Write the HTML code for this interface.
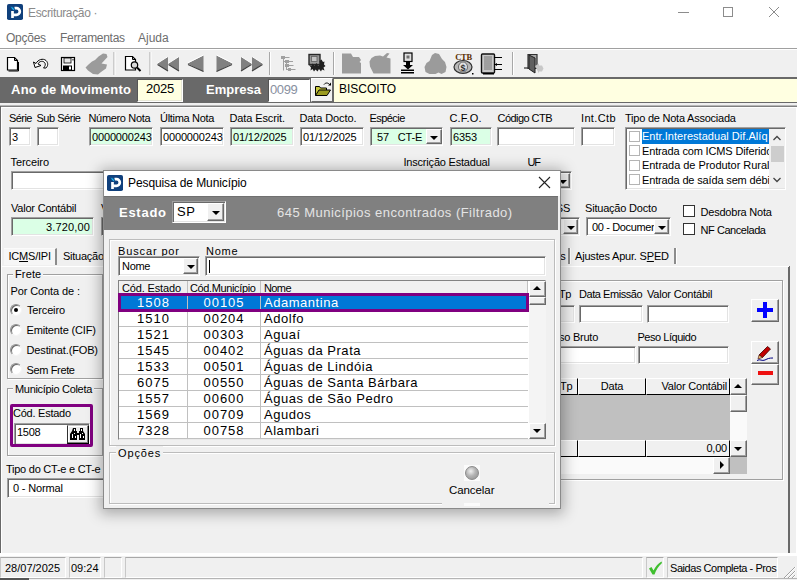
<!DOCTYPE html>
<html><head><meta charset="utf-8">
<style>
*{box-sizing:border-box;margin:0;padding:0}
html,body{width:797px;height:580px;overflow:hidden;background:#f0f0f0;font-family:"Liberation Sans",sans-serif;font-size:11px;color:#000}
.a{position:absolute;white-space:nowrap}
.l{position:absolute;white-space:nowrap;font-size:11px;line-height:14px;letter-spacing:-0.25px;color:#000}
.i{position:absolute;background:#fff;border:1px solid;border-color:#a0a0a0 #fff #fff #a0a0a0;box-shadow:inset 1px 1px 0 #696969,inset -1px -1px 0 #e3e3e3;font-size:11px;line-height:18px;padding-left:2px;white-space:nowrap;overflow:hidden;letter-spacing:-0.15px}
.g{background:#dbffe6}
.y{background:#ffffe1}
.db{position:absolute;background:#f0f0f0;border:1px solid;border-color:#fff #696969 #696969 #fff;box-shadow:inset -1px -1px 0 #a0a0a0}
.db:after{content:"";position:absolute;left:50%;top:50%;margin:-1px 0 0 -4px;border:4px solid transparent;border-top-color:#000;border-bottom-width:0}
.bt{position:absolute;background:#f0f0f0;border:1px solid;border-color:#fff #696969 #696969 #fff;box-shadow:inset -1px -1px 0 #a0a0a0}
.cb{position:absolute;width:12px;height:12px;background:#fff;border:1px solid #333}
.gb{position:absolute;border:1px solid #a0a0a0;box-shadow:inset 1px 1px 0 #fff,1px 1px 0 #fff}
.gt{position:absolute;background:#f0f0f0;padding:0 2px;font-size:11px;line-height:14px;white-space:nowrap;letter-spacing:-0.15px}
.rd{position:absolute;width:12px;height:12px;border-radius:50%;background:#fff;border:1px solid;border-color:#909090 #f4f4f4 #f4f4f4 #909090;box-shadow:inset 1px 1px 0 #686868}
.vs{position:absolute;width:3px;border-left:2px solid #8c8c8c;border-right:1px solid #fff}
.tl{font-size:11px;line-height:15px;letter-spacing:-0.15px;width:127px;overflow:hidden}
.tc{width:11px;height:11px;background:#fff;border:1px solid #b4b4b4}
.hc{position:absolute;background:#f0f0f0;border:1px solid;border-color:#fff #000 #000 #fff;font-size:11px;line-height:15px;white-space:nowrap;overflow:hidden;letter-spacing:-0.20px}
.sb{position:absolute;background:#f0f0f0;border:1px solid;border-color:#fff #696969 #696969 #fff;box-shadow:inset -1px -1px 0 #a0a0a0}
.sb i{position:absolute;left:50%;top:50%;border:4px solid transparent}
.sb .up{margin:-3px 0 0 -5px;border-bottom-color:#000;border-top-width:0}
.sb .dn{margin:-2px 0 0 -5px;border-top-color:#000;border-bottom-width:0}
.sb .rt{margin:-5px 0 0 -2px;border-left-color:#000;border-right-width:0}
.sbt{background:#fafafa}
.sp{position:absolute;height:21px;border:1px solid;border-color:#a8a8a8 #fff #fff #c8c8c8;font-size:11px;line-height:20px;padding-left:5px;white-space:nowrap;overflow:hidden;letter-spacing:-0.15px}
.gh{height:14px;background:#f0f0f0;border-right:1px solid #c0c0c0;border-bottom:1px solid #c0c0c0;font-size:11px;line-height:14px;padding-left:3px;letter-spacing:-0.15px;overflow:hidden}
.gr{left:15px;width:409px;height:16px;border-bottom:1px solid #c0c0c0;font-size:13px;line-height:15px;letter-spacing:1px;background:#fff}
.gr span{position:absolute;top:0;height:15px;overflow:hidden}
.gr .c1{left:0;width:69px;text-align:center;padding-left:1px;border-right:1px solid #c0c0c0}
.gr .c2{left:69px;width:73px;text-align:center;padding-left:0;border-right:1px solid #c0c0c0}
.gr .c3{left:142px;width:267px;padding-left:3px;letter-spacing:0.53px}
.sel{background:#0078d7;color:#fff}
</style></head><body>
<!-- title bar -->
<div class="a" style="left:0;top:0;width:797px;height:30px;background:#fff"></div>
<svg class="a" style="left:7px;top:4px" width="16" height="16" viewBox="0 0 16 16"><rect width="16" height="16" rx="1.800" fill="#10407c"/><path d="M5.500 14V7M7.500 4.200h2a3.300 3.300 0 0 1 0 6.600H5.500" fill="none" stroke="#fff" stroke-width="2.700"/><path d="M3.600 2.300c2.500 0.500 4.200 2 4 4.500C5.300 6.400 3.900 4.800 3.600 2.300z" fill="#19b5f0" stroke="#10407c" stroke-width="0.800"/></svg>
<div class="a" style="left:28px;top:5px;font-size:12px;line-height:16px;color:#8a8a8a;letter-spacing:-0.35px">Escrituração ·</div>
<svg class="a" style="left:674px;top:0" width="122" height="26" viewBox="0 0 122 26"><g stroke="#8c8c8c" stroke-width="1" fill="none"><path d="M4 12.5h11"/><rect x="49.500" y="7.500" width="9" height="9"/><path d="M95 7l10 10M105 7l-10 10"/></g></svg>
<!-- menu -->
<div class="a" style="left:0;top:30px;width:797px;height:18px;background:#fff"></div>
<div class="a" style="left:6px;top:30px;font-size:12px;line-height:16px;color:#6d6d6d;letter-spacing:-0.25px">Opções</div>
<div class="a" style="left:60px;top:30px;font-size:12px;line-height:16px;color:#6d6d6d;letter-spacing:-0.3px">Ferramentas</div>
<div class="a" style="left:138px;top:30px;font-size:12px;line-height:16px;color:#6d6d6d">Ajuda</div>
<div class="a" style="left:0;top:48px;width:797px;height:1px;background:#a0a0a0"></div>
<!-- toolbar -->
<div class="a" id="tb" style="left:0;top:49px;width:797px;height:28px;background:#f0f0f0"></div>
<svg class="a" style="left:0;top:49px" width="797" height="28" viewBox="0 49 797 28" shape-rendering="auto">
<rect x="0" y="49" width="797" height="1" fill="#fff"/>
<!-- new -->
<path d="M7.500 57.500h7l3 3v9.500h-10z" fill="#fff" stroke="#000" stroke-width="1.200"/><path d="M14.500 57.500v3h3" fill="none" stroke="#000" stroke-width="1"/><path d="M8.500 71h10v-9" fill="none" stroke="#000" stroke-width="1"/>
<!-- undo -->
<path d="M35 67.500l-1.500-5.500 2.500 1.500c2-4 7-5.500 10-3 2.500 2.500 2 5.500 0 7.500h-2.500c2-2 2.500-4.500 0.500-6-2-1.500-5-0.500-6 2l3 1.500z" fill="#fff" stroke="#000" stroke-width="1" stroke-linejoin="round"/>
<!-- save -->
<rect x="61.500" y="57.500" width="13" height="13" fill="#fff" stroke="#000" stroke-width="1.200"/><rect x="64" y="58" width="7" height="5" fill="#e8e8e8" stroke="#000" stroke-width="0.800"/><rect x="63" y="65.500" width="9" height="5" fill="#000"/><rect x="69" y="66.500" width="2" height="3" fill="#fff"/><rect x="72.500" y="59" width="1" height="1.500" fill="#000"/>
<!-- brush gray -->
<path d="M103 53.500l3.500 0.500 1 3-6 6.500 5.500 1-1 4-5 3.500-3 2.500-5-0.500-5-3.500-2.500-3 3-3 3.500-3 3-1.500 3.500-3.500z" fill="#9b9b9b"/>
<!-- sep -->
<g id="sp"><rect x="113.500" y="52" width="1" height="23" fill="#a8a8a8"/><rect x="114.500" y="52" width="1" height="23" fill="#fff"/></g>
<!-- preview -->
<path d="M125.500 56.500h7l3 3v10.500h-10z" fill="#fff" stroke="#000" stroke-width="1.200"/><path d="M132.500 56.500v3h3" fill="none" stroke="#000"/><circle cx="134.500" cy="65" r="3.200" fill="#d8d8d8" stroke="#000" stroke-width="1.200"/><path d="M137 67.500l3.500 3.500" stroke="#000" stroke-width="2"/>
<use href="#sp" x="36"/>
<!-- dbl left -->
<g id="tl"><path d="M157 63.500l11-7v14.500z" fill="#808080"/><path d="M157 63.500l11-7" stroke="#fff" stroke-width="1"/><path d="M157.500 64.500l10.500 6.500" stroke="#404040" stroke-width="1.200"/></g>
<use href="#tl" x="11"/>
<path d="M187.500 63.500l16-8v16z" fill="#808080"/><path d="M187.500 63l16-8" stroke="#fff"/><path d="M188 64.500l15.500 7" stroke="#404040" stroke-width="1.200"/>
<path d="M232.500 63.500l-16-8v16z" fill="#808080"/><path d="M232.500 63l-16-8" stroke="#fff"/><path d="M232 64.500l-15.500 7" stroke="#404040" stroke-width="1.200"/>
<g id="tr"><path d="M252 63.500l-11-7v14.500z" fill="#808080"/><path d="M252 63.500l-11-7" stroke="#fff" stroke-width="1"/><path d="M251.500 64.500l-10.500 6.500" stroke="#404040" stroke-width="1.200"/></g>
<use href="#tr" x="11"/>
<use href="#sp" x="155.500"/>
<!-- tree gray -->
<g stroke="#a0a0a0" fill="none"><path d="M283.500 57v13.500M283.500 57.500h6M283.500 61.500h3M286.500 61.500v8.500M288 61.500h5M286.500 65.500h7M286.500 69.500h9"/></g><g fill="#a0a0a0"><rect x="281" y="56" width="4" height="3"/><rect x="285" y="60" width="4" height="3"/><rect x="285" y="64" width="4" height="3"/><rect x="288" y="68" width="3" height="3"/></g>
<!-- puzzle/monitor dark -->
<rect x="309" y="54.500" width="11" height="10" fill="#989898" stroke="#282828" stroke-width="1.400"/><rect x="311.500" y="56.500" width="5.500" height="5" fill="#c4c4c4" stroke="#606060" stroke-width="0.800"/><path d="M309 65l2.500 0.500 1-2 2 2 2-2.500 1.500 2.500 2-1-0.500-3.500 2-1.500 1.500 2.500 1.500-0.500-0.500 3 1.500 1.500-2 1.500 1 3-2.500-1-1 2-2-2.500-1.500 2.500-2-2-1.500 2-1.500-2.500-2 1.500 0.500-3z" fill="#202020"/>
<use href="#sp" x="219.500"/>
<!-- gray folder -->
<path d="M342 53.500h9l2 3.500h6l2 3-1.500 2 1.500 1v10.500h-19z" fill="#9b9b9b"/>
<!-- gray apple-like -->
<path d="M375 56l5-0.500 3 1 4-3.500 2.500 0.500-3 4 4 1v15h-17l-3.500-7-0.500-5 2-3.500z" fill="#9b9b9b"/>
<!-- download -->
<rect x="404" y="53" width="8" height="8.500" fill="#e0e0e0" stroke="#000" stroke-width="1.200"/><rect x="406.500" y="55.500" width="3" height="3" fill="#707070"/><path d="M406 62h4v3h3l-5 4.500-5-4.500h3z" fill="#000"/><rect x="401" y="69.500" width="13" height="1.500" fill="#000"/><rect x="401" y="72" width="13" height="1.500" fill="#000"/>
<!-- gray heap -->
<path d="M432 55l3-2 4 1 3 5 3 3 1.500 5-1 5-4 2-3-1.500-3 1.500h-6l-4-2-1-5 2-4 3-2z" fill="#9b9b9b"/>
<!-- CTB bag -->
<text x="463.500" y="60" font-family="Liberation Serif" font-weight="bold" font-size="8.500" fill="#5a2d00" text-anchor="middle" letter-spacing="-0.300">CTB</text>
<ellipse cx="463" cy="67" rx="9" ry="6.500" fill="#b8b8b8" stroke="#303030" stroke-width="1.200"/><ellipse cx="463" cy="67" rx="4.500" ry="5" fill="#e0e0e0" stroke="#505050" stroke-width="0.800"/><text x="463" y="70.500" font-family="Liberation Sans" font-weight="bold" font-size="9" fill="#303030" text-anchor="middle">$</text><rect x="472" y="73" width="1.500" height="1.500" fill="#000"/>
<!-- notebook -->
<rect x="481.500" y="54" width="13" height="19" rx="1" fill="#c8c8c8" stroke="#101010" stroke-width="1.400"/><g stroke="#606060" stroke-width="0.800"><path d="M484 57h8M484 59h8M484 61h8M484 63h8M484 65h8M484 67h8M484 69h8"/></g><g stroke="#000" stroke-width="1.200"><path d="M494 57.500h8M494 64.500h8M494 69.500h8"/></g><path d="M497 63l-2.500 1.500 2.500 1.500z" fill="#000"/><rect x="483" y="73" width="11" height="1.500" fill="#000"/>
<use href="#sp" x="398.500"/>
<!-- exit door -->
<path d="M528 54.500h9v14h-9z" fill="#a8a8a8" stroke="#303030" stroke-width="1.200"/><path d="M529 55l6 3v15l-6-4z" fill="#606060" stroke="#202020" stroke-width="1"/><path d="M524 68h5" stroke="#303030" stroke-width="1.200"/><path d="M535 66l4-2.500v2h3l1.500 3-1.500 3h-3v2z" fill="#c8c8c8"/>
</svg>
<!-- ano bar -->
<div class="a" style="left:0;top:77px;width:797px;height:26px;background:#696969"></div>
<div class="a" style="left:11px;top:82px;font-size:13px;font-weight:bold;color:#fff;line-height:16px;letter-spacing:0.25px">Ano de Movimento</div>
<div class="a y" style="left:137px;top:79px;width:46px;height:23px;font-size:13px;line-height:18px;padding-left:8px;border:1px solid;border-color:#555 #fff #fff #555;box-shadow:inset -1px -1px 0 #e8e8d8;letter-spacing:-0.2px">2025</div>
<div class="a" style="left:206px;top:82px;font-size:13px;font-weight:bold;color:#fff;line-height:16px">Empresa</div>
<div class="a" style="left:268px;top:79px;width:42px;height:23px;background:#fff;font-size:13px;line-height:20px;padding-left:1px;color:#8890a0;letter-spacing:-0.4px;border:1px solid;border-color:#555 #fff #fff #555">0099</div>
<div class="a" style="left:311px;top:78px;width:22px;height:24px;background:#f0f0f0;border:1px solid;border-color:#fff #696969 #696969 #fff"></div>
<svg class="a" style="left:314px;top:81px" width="18" height="16" viewBox="0 0 18 16"><path d="M1.500 14.500v-9h4l1 1.500h6v2.500" fill="#c8c83c" stroke="#000" stroke-width="1"/><path d="M1.500 14.500l3.500-5.500h11.500l-3.500 5.500z" fill="#9a9a20" stroke="#000" stroke-width="1"/><path d="M10 3.500c1.500-2 4-2 5.500 0" fill="none" stroke="#000" stroke-width="1"/><path d="M14 4.500h3v-3z" fill="#000"/></svg>
<div class="a y" style="left:334px;top:79px;width:463px;height:23px;font-size:12px;line-height:21px;padding-left:5px">BISCOITO</div>
<div class="a" style="left:0;top:103px;width:797px;height:2px;background:#f0f0f0"></div>
<div class="a" style="left:0;top:105px;width:797px;height:1px;background:#b8b8b8"></div><div class="a" style="left:0;top:106px;width:797px;height:1px;background:#808080"></div>


<!-- main form frame -->
<div class="a" style="left:0;top:106px;width:1px;height:447px;background:#686868"></div>
<div class="a" style="left:1px;top:107px;width:1px;height:446px;background:#fff"></div>
<div class="a" style="left:1px;top:107px;width:796px;height:1px;background:#fff"></div>
<div class="a" style="left:796px;top:107px;width:1px;height:447px;background:#fff"></div>
<!-- row 1 labels -->
<div class="l" style="left:9.0px;top:111px;letter-spacing:-0.55px">Série</div>
<div class="l" style="left:36.5px;top:111px;letter-spacing:-0.48px">Sub Série</div>
<div class="l" style="left:88.5px;top:111px;letter-spacing:-0.34px">Número Nota</div>
<div class="l" style="left:160.0px;top:111px;letter-spacing:-0.30px">Última Nota</div>
<div class="l" style="left:229.5px;top:111px;letter-spacing:-0.12px">Data Escrit.</div>
<div class="l" style="left:299.5px;top:111px;letter-spacing:-0.11px">Data Docto.</div>
<div class="l" style="left:369.5px;top:111px;letter-spacing:-0.55px">Espécie</div>
<div class="l" style="left:449.5px;top:111px;letter-spacing:0.17px">C.F.O.</div>
<div class="l" style="left:497.5px;top:111px;letter-spacing:-0.55px">Código CTB</div>
<div class="l" style="left:581.0px;top:111px;letter-spacing:0.35px">Int.Ctb</div>
<div class="l" style="left:625.0px;top:111px;letter-spacing:-0.23px">Tipo de Nota Associada</div>
<!-- row 1 inputs -->
<div class="i" style="left:9px;top:127px;width:22px;height:19px">3</div>
<div class="i" style="left:37px;top:127px;width:22px;height:19px"></div>
<div class="i g" style="left:89px;top:127px;width:64px;height:19px">0000000243</div>
<div class="i" style="left:160px;top:127px;width:64px;height:19px">0000000243</div>
<div class="i g" style="left:230px;top:127px;width:64px;height:19px">01/12/2025</div>
<div class="i" style="left:300px;top:127px;width:64px;height:19px">01/12/2025</div>
<div class="i g" style="left:370px;top:127px;width:73px;height:19px;padding-left:6px">57 &nbsp; CT-E</div>
<div class="db" style="left:426px;top:129px;width:16px;height:15px"></div>
<div class="i g" style="left:450px;top:127px;width:42px;height:19px">6353</div>
<div class="i" style="left:497px;top:127px;width:78px;height:19px"></div>
<div class="i" style="left:581px;top:127px;width:34px;height:19px"></div>
<!-- tipo list -->
<div class="i" style="left:625px;top:127px;width:161px;height:63px;padding:0"></div>
<div class="a" style="left:769px;top:129px;width:16px;height:59px;background:#f0f0f0"></div>
<div class="a" style="left:771px;top:146px;width:13px;height:16px;background:#cdcdcd"></div>
<svg class="a" style="left:769px;top:129px" width="16" height="59" viewBox="0 0 16 59"><path d="M4.500 11 8 7.500 11.500 11M4.500 49 8 52.500 11.500 49" fill="none" stroke="#444" stroke-width="1.300"/></svg>
<div class="a" style="left:642px;top:129px;width:127px;height:15px;background:#0078d7"></div>
<div class="a tl" style="left:642px;top:129px;color:#fff;letter-spacing:0.03px">Entr.Interestadual Dif.Alíq</div>
<div class="a tl" style="left:642px;top:144px">Entrada com ICMS Diferido</div>
<div class="a tl" style="left:642px;top:158px;letter-spacing:-0.04px">Entrada de Produtor Rural</div>
<div class="a tl" style="left:642px;top:173px">Entrada de saída sem débi</div>
<div class="a tc" style="left:629px;top:131px"></div>
<div class="a tc" style="left:629px;top:145px"></div>
<div class="a tc" style="left:629px;top:160px"></div>
<div class="a tc" style="left:629px;top:174px"></div>
<!-- row 2 -->
<div class="l" style="left:10.5px;top:155px;letter-spacing:-0.09px">Terceiro</div>
<div class="l" style="left:403.5px;top:155px;letter-spacing:-0.20px">Inscrição Estadual</div>
<div class="l" style="left:527.5px;top:155px;letter-spacing:-1.2px">UF</div>
<div class="i" style="left:11px;top:171px;width:300px;height:19px"></div>
<div class="i" style="left:520px;top:171px;width:52px;height:19px"></div>
<div class="db" style="left:555px;top:173px;width:15px;height:15px"></div>
<!-- row 3 -->
<div class="l" style="left:11.0px;top:201px;letter-spacing:-0.21px">Valor Contábil</div>
<div class="i g" style="left:11px;top:217px;width:83px;height:19px;text-align:right;padding-right:3px;letter-spacing:0.15px">3.720,00</div>
<div class="l" style="left:101px;top:201px">V</div>
<div class="i" style="left:101px;top:217px;width:60px;height:19px"></div>
<div class="l" style="left:553px;top:201px">ISS</div>
<div class="i" style="left:540px;top:217px;width:40px;height:19px"></div>
<div class="db" style="left:563px;top:219px;width:15px;height:15px"></div>
<div class="l" style="left:585.0px;top:201px;letter-spacing:-0.20px">Situação Docto</div>
<div class="i" style="left:586px;top:217px;width:85px;height:19px;padding-left:5px;letter-spacing:-0.35px">00 - Documento</div>
<div class="db" style="left:654px;top:219px;width:15px;height:15px"></div>
<div class="cb" style="left:683px;top:205px"></div>
<div class="l" style="left:700.5px;top:205px;letter-spacing:-0.21px">Desdobra Nota</div>
<div class="cb" style="left:683px;top:223px"></div>
<div class="l" style="left:700.5px;top:223px;letter-spacing:-0.44px">NF Cancelada</div>

<!-- tabs -->
<div class="a" style="left:4px;top:248px;width:53px;height:17px;background:#f6f6f6;border-right:2px solid #8c8c8c;border-top:1px solid #fbfbfb"></div>
<div class="l" style="left:8.5px;top:249px;letter-spacing:-0.22px">IC<u>M</u>S/IPI</div>

<div class="l" style="left:63px;top:249px">Situação</div>
<div class="l" style="left:534px;top:249px">Outros</div>
<div class="vs" style="left:568px;top:248px;height:16px"></div>
<div class="l" style="left:575.0px;top:249px;letter-spacing:-0.19px">Ajustes Apur. S<u>P</u>ED</div>
<div class="vs" style="left:674px;top:248px;height:16px"></div>
<!-- tab page borders -->
<div class="a" style="left:788px;top:266px;width:2px;height:287px;background:#696969"></div>
<div class="a" style="left:2px;top:266px;width:787px;height:1px;background:#fff"></div>
<!-- left: Frete -->
<div class="gb" style="left:7px;top:274px;width:96px;height:105px"></div>
<div class="gt" style="left:13px;top:267px;letter-spacing:0.13px">Frete</div>
<div class="l" style="left:10.5px;top:284px;letter-spacing:-0.11px">Por Conta de :</div>
<div class="rd" style="left:10px;top:304px"></div><div class="a" style="left:14px;top:308px;width:4px;height:4px;border-radius:50%;background:#000"></div>
<div class="l" style="left:27.0px;top:303px;letter-spacing:-0.16px">Terceiro</div>
<div class="rd" style="left:10px;top:324px"></div>
<div class="l" style="left:26.5px;top:323px;letter-spacing:-0.16px">Emitente (CIF)</div>
<div class="rd" style="left:10px;top:344px"></div>
<div class="l" style="left:26.5px;top:343px;letter-spacing:-0.14px">Destinat.(FOB)</div>
<div class="rd" style="left:10px;top:363px"></div>
<div class="l" style="left:26.5px;top:363px;letter-spacing:-0.36px">Sem Frete</div>
<!-- Municipio Coleta -->
<div class="gb" style="left:7px;top:388px;width:96px;height:68px"></div>
<div class="gt" style="left:13px;top:382px;letter-spacing:-0.31px">Município Coleta</div>

<div class="l" style="left:13.0px;top:406px;letter-spacing:-0.25px">Cód. Estado</div>
<div class="i" style="left:14px;top:423px;width:76px;height:22px;line-height:16px;padding-left:2px;letter-spacing:-0.3px">1508</div>
<div class="bt" style="left:67px;top:425px;width:22px;height:19px;background:#ececec;border-color:#c8c8c8 #000 #000 #303030;box-shadow:inset -1px -1px 0 #808080,inset 1px 1px 0 #fff"></div>
<svg class="a" style="left:70px;top:428px" width="16" height="12" viewBox="0 0 16 12"><g fill="#000"><path d="M3 0h3v3h1v2h2V3h1V0h3v3l2 3v6h-6V7H7v5H0V6l2-3z"/></g><g fill="#fff"><rect x="2" y="6" width="1" height="4"/><rect x="4" y="5" width="1" height="1"/><rect x="10" y="6" width="1" height="4"/><rect x="12" y="5" width="1" height="1"/><rect x="4" y="1" width="1" height="2"/><rect x="11" y="1" width="1" height="2"/><rect x="5" y="8" width="1" height="2"/><rect x="13" y="8" width="1" height="2"/></g></svg>
<div class="a" style="left:10px;top:404px;width:83px;height:43px;border:3px solid #800080;border-radius:2px"></div>
<div class="l" style="left:6px;top:462px">Tipo do CT-e e CT-e</div>
<div class="i" style="left:7px;top:478px;width:300px;height:20px;padding-left:5px">0 - Normal</div>
<!-- right inner panel -->
<div class="gb" style="left:480px;top:280px;width:303px;height:200px"></div>
<div class="l" style="left:559.0px;top:287px;letter-spacing:-0.55px">Tp</div>
<div class="i" style="left:550px;top:305px;width:25px;height:18px;background:#f0f0f0"></div>
<div class="l" style="left:579.0px;top:287px;letter-spacing:-0.45px">Data Emissão</div>
<div class="i" style="left:579px;top:305px;width:64px;height:18px"></div>
<div class="l" style="left:647.0px;top:287px;letter-spacing:-0.21px">Valor Contábil</div>
<div class="i" style="left:647px;top:305px;width:82px;height:18px"></div>
<div class="l" style="left:546.1px;top:330px;letter-spacing:-0.25px">Peso Bruto</div>
<div class="i" style="left:540px;top:346px;width:96px;height:18px"></div>
<div class="l" style="left:637.5px;top:330px;letter-spacing:-0.47px">Peso Líquido</div>
<div class="i" style="left:638px;top:346px;width:91px;height:18px"></div>
<div class="bt" style="left:751px;top:299px;width:28px;height:23px"></div>
<div class="a" style="left:757px;top:308px;width:16px;height:4px;background:#0000ff"></div>
<div class="a" style="left:763px;top:302px;width:4px;height:16px;background:#0000ff"></div>
<div class="bt" style="left:751px;top:341px;width:28px;height:23px"></div>
<svg class="a" style="left:755px;top:344px" width="20" height="18" viewBox="0 0 20 18"><path d="M4 11 12.500 2.500l3 2.500L7.500 13.500z" fill="#c00000" stroke="#400000" stroke-width="0.800"/><path d="M4 11 7.500 13.500 3 15z" fill="#e8c070" stroke="#400000" stroke-width="0.600"/><path d="M2 16.500c3-2 5 1 8-0.500s4-2 8-2" fill="none" stroke="#000080" stroke-width="1"/></svg>
<div class="bt" style="left:751px;top:364px;width:28px;height:21px"></div>
<div class="a" style="left:758px;top:371px;width:15px;height:4px;background:#ee1111"></div>
<!-- right grid -->
<div class="a" style="left:540px;top:378px;width:207px;height:96px;background:#c0c0c0"></div>
<div class="hc" style="left:540px;top:378px;width:38px;height:17px;padding-left:19px">Tp</div>
<div class="hc" style="left:578px;top:378px;width:68px;height:17px;text-align:center">Data</div>
<div class="hc" style="left:646px;top:378px;width:84px;height:17px;text-align:right;padding-right:2px">Valor Contábil</div>
<div class="hc" style="left:540px;top:440px;width:38px;height:17px"></div>
<div class="hc" style="left:578px;top:440px;width:68px;height:17px"></div>
<div class="hc" style="left:646px;top:440px;width:84px;height:17px;text-align:right;padding-right:2px">0,00</div>
<div class="a sbt" style="left:730px;top:378px;width:17px;height:79px"></div>
<div class="sb" style="left:730px;top:378px;width:17px;height:17px"><i class="up"></i></div>
<div class="sb" style="left:730px;top:395px;width:17px;height:17px"></div>
<div class="sb" style="left:730px;top:440px;width:17px;height:17px"><i class="dn"></i></div>
<div class="a sbt" style="left:540px;top:457px;width:190px;height:17px"></div>
<div class="sb" style="left:713px;top:457px;width:17px;height:17px"><i class="rt"></i></div>
<!-- status bar -->
<div class="a" style="left:0;top:553px;width:797px;height:3px;background:#fff"></div><div class="a" style="left:0;top:556px;width:797px;height:24px;background:#f0f0f0"></div>
<div class="sp" style="left:0;top:557px;width:66px;padding-left:4px;letter-spacing:0">28/07/2025</div>
<div class="sp" style="left:69px;top:557px;width:32px;padding-left:1px;letter-spacing:0">09:24</div>
<div class="sp" style="left:104px;top:557px;width:18px"></div>
<div class="sp" style="left:125px;top:557px;width:518px"></div>
<div class="sp" style="left:646px;top:557px;width:18px"></div>
<div class="sp" style="left:667px;top:557px;width:111px;padding-left:2px;letter-spacing:-0.45px">Saidas Completa - Pros</div>
<svg class="a" style="left:648px;top:561px" width="15" height="14" viewBox="0 0 15 14"><path d="M1 7.500 3.500 6 5.500 9.500C7.500 5.500 10 2.500 13.500 0.500L14 2C10.500 5 8 9 6.500 13.500L4.500 13.500z" fill="#3fbf2f"/></svg>
<svg class="a" style="left:783px;top:566px" width="13" height="13" viewBox="0 0 13 13"><path d="M12 1 1 12M12 5 5 12M12 9 9 12" stroke="#a0a0a0" stroke-width="1"/><path d="M13 1 2 12M13 5 6 12M13 9 10 12" stroke="#fff" stroke-width="1"/></svg>
<div class="a" style="left:0;top:578px;width:797px;height:1px;background:#b4b4b4"></div><div class="a" style="left:0;top:578px;width:29px;height:2px;background:#555"></div>

<!-- dialog -->
<div id="dlg" class="a" style="left:103px;top:170px;width:458px;height:339px;background:#f0f0f0;border:1px solid #8a8a8a;box-shadow:0 2px 13px 3px rgba(0,0,0,0.29)">
<div class="a" style="left:0;top:0;width:456px;height:25px;background:#fff"></div>
<svg class="a" style="left:3px;top:4px" width="16" height="16" viewBox="0 0 16 16"><rect width="16" height="16" rx="1.800" fill="#10407c"/><path d="M5.500 14V7M7.500 4.200h2a3.300 3.300 0 0 1 0 6.600H5.500" fill="none" stroke="#fff" stroke-width="2.700"/><path d="M3.600 2.300c2.500 0.500 4.200 2 4 4.500C5.300 6.400 3.900 4.800 3.600 2.300z" fill="#19b5f0" stroke="#10407c" stroke-width="0.800"/></svg>
<div class="a" style="left:24px;top:4px;font-size:12px;line-height:16px;color:#000;letter-spacing:-0.10px">Pesquisa de Município</div>
<svg class="a" style="left:434px;top:5px" width="13" height="13" viewBox="0 0 13 13"><path d="M1 1l11 11M12 1 1 12" stroke="#222" stroke-width="1.100"/></svg>
<div class="a" style="left:0;top:25px;width:454px;height:34px;background:#808080;border-top:1px solid #707070"></div>
<div class="a" style="left:15px;top:34px;font-size:13px;font-weight:bold;color:#fff;line-height:16px;letter-spacing:0.73px">Estado</div>
<div class="i" style="left:68px;top:30px;width:54px;height:22px;font-size:13px;line-height:19px;padding-left:4px;letter-spacing:0.6px">SP</div>
<div class="db" style="left:103px;top:32px;width:17px;height:18px"></div>
<div class="a" style="left:173px;top:34px;font-size:13px;color:#e4e4e4;line-height:16px;letter-spacing:0.47px">645 Municípios encontrados (Filtrado)</div>
<!-- inner panel -->
<div class="gb" style="left:5px;top:68px;width:446px;height:207px;border-color:#bcbcbc"></div>
<div class="a" style="left:14px;top:73px;font-size:11px;line-height:14px;letter-spacing:0.87px">Buscar por</div>
<div class="a" style="left:102px;top:73px;font-size:11px;line-height:14px;letter-spacing:0.72px">Nome</div>
<div class="i" style="left:14px;top:85px;width:82px;height:20px;padding-left:3px;letter-spacing:-0.3px;line-height:19px">Nome</div>
<div class="db" style="left:79px;top:87px;width:15px;height:16px"></div>
<div class="i" style="left:101px;top:85px;width:341px;height:20px"></div>
<div class="a" style="left:105px;top:89px;width:1px;height:13px;background:#000"></div>
<!-- grid -->
<div class="a" style="left:14px;top:109px;width:428px;height:160px;background:#fff;border:1px solid #828282;border-right-color:#e8e8e8;border-bottom-color:#e8e8e8"></div>
<div class="a gh" style="left:15px;top:110px;width:69px">Cód. Estado</div>
<div class="a gh" style="left:84px;top:110px;width:73px;padding-left:2px;letter-spacing:-0.37px">Cód.Município</div>
<div class="a gh" style="left:157px;top:110px;width:267px;letter-spacing:-0.6px">Nome</div>
<div class="a gr sel" style="top:124px"><span class="c1">1508</span><span class="c2">00105</span><span class="c3">Adamantina</span></div>
<div class="a gr" style="top:140px"><span class="c1">1510</span><span class="c2">00204</span><span class="c3">Adolfo</span></div>
<div class="a gr" style="top:156px"><span class="c1">1521</span><span class="c2">00303</span><span class="c3">Aguaí</span></div>
<div class="a gr" style="top:172px"><span class="c1">1545</span><span class="c2">00402</span><span class="c3">Águas da Prata</span></div>
<div class="a gr" style="top:188px"><span class="c1">1533</span><span class="c2">00501</span><span class="c3">Águas de Lindóia</span></div>
<div class="a gr" style="top:204px"><span class="c1">6075</span><span class="c2">00550</span><span class="c3">Águas de Santa Bárbara</span></div>
<div class="a gr" style="top:220px"><span class="c1">1557</span><span class="c2">00600</span><span class="c3">Águas de São Pedro</span></div>
<div class="a gr" style="top:236px"><span class="c1">1569</span><span class="c2">00709</span><span class="c3">Agudos</span></div>
<div class="a gr" style="top:252px"><span class="c1">7328</span><span class="c2">00758</span><span class="c3">Alambari</span></div>

<div class="a" style="left:14px;top:122px;width:411px;height:19px;border:3px solid #800080"></div>
<div class="a sbt" style="left:425px;top:110px;width:17px;height:158px;background:#f4f4f4"></div>
<div class="sb" style="left:425px;top:110px;width:17px;height:16px"><i class="up"></i></div>
<div class="sb" style="left:425px;top:126px;width:17px;height:8px"></div>
<div class="sb" style="left:425px;top:252px;width:17px;height:16px"><i class="dn"></i></div>
<!-- opcoes -->
<div class="gb" style="left:5px;top:281px;width:446px;height:52px;border-color:#bcbcbc"></div>
<div class="a" style="left:12px;top:275px;background:#f0f0f0;padding:0 2px;font-size:11px;line-height:14px;letter-spacing:0.86px">Opções</div>
<div class="a" style="left:338px;top:290px;width:107px;height:46px;background:#f0f0f0"></div>
<div class="a" style="left:360px;top:294px;width:16px;height:16px;background:#fbfbfb"></div>
<div class="a" style="left:361px;top:295px;width:14px;height:14px;border-radius:50%;border:1px solid #8a8a8a;background:radial-gradient(circle at 40% 35%,#f0f0f0 0,#b4b4b4 45%,#8c8c8c 100%)"></div>
<div class="a" style="left:360px;top:332px;width:16px;height:3px;background:#fbfbfb"></div>
<div class="a" style="left:345px;top:311px;font-size:11.5px;line-height:16px;letter-spacing:-0.08px">Cancelar</div>
</div>
</body></html>
